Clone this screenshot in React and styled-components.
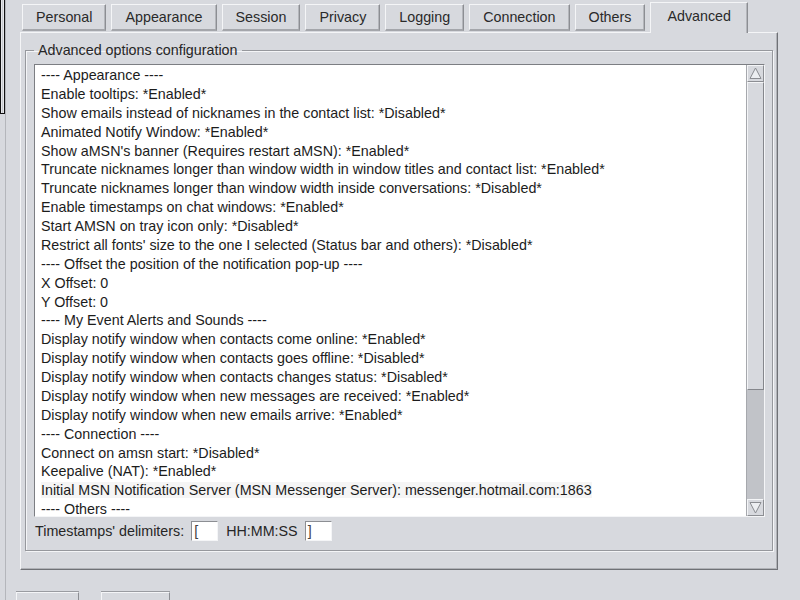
import React from 'react';
import styled, { createGlobalStyle } from 'styled-components';

const Global = createGlobalStyle`
  html, body {
    margin: 0;
    padding: 0;
    background: #d7d9de;
  }
  body {
    font-family: "Liberation Sans", Arial, sans-serif;
    font-size: 14.3px;
    color: #1c1c1c;
  }
`;

const Window = styled.div`
  display: flex;
  width: 800px;
  height: 600px;
  overflow: hidden;
  background: #d7d9de;
`;

const LeftEdge = styled.div`
  width: 6px;
  flex: none;
  display: flex;
  flex-direction: column;
  border-right: 1px solid #b4b6bb;
  box-sizing: border-box;

  .frame {
    height: 114px;
    width: 5px;
    box-sizing: border-box;
    border: 1px solid #111;
    border-top: none;
    background: #c8cacf;
    box-shadow: inset 1px 0 0 #e6e7ea, inset -1px 0 0 #e6e7ea;
  }
`;

const Body = styled.div`
  flex: 1;
  padding: 2px 22px 0 14px;
  display: flex;
  flex-direction: column;
`;

const TabBar = styled.div`
  display: flex;
  align-items: flex-end;
  gap: 5px;
  padding-left: 2px;
  position: relative;
  z-index: 1;
`;

const Tab = styled.div`
  box-sizing: border-box;
  height: ${p => (p.$active ? '31px' : '27px')};
  margin-bottom: ${p => (p.$active ? '-1px' : '1px')};
  padding: 0 ${p => (p.$active ? '16px' : '13px')};
  display: flex;
  align-items: center;
  padding-bottom: ${p => (p.$active ? '4px' : '1px')};
  background: #d7d9de;
  border: 1px solid #8c8e93;
  border-top-color: #f4f5f7;
  border-left-color: #f4f5f7;
  border-bottom: ${p => (p.$active ? 'none' : '2px solid #a4a6ab')};
  box-shadow: inset -1px 0 0 #b4b6bb;
  color: #2a2a2a;
  white-space: nowrap;
`;

const Panel = styled.div`
  box-sizing: border-box;
  height: 539px;
  border: 1px solid #6f7176;
  border-top-color: #f4f5f7;
  border-left-color: #f4f5f7;
  box-shadow: inset -1px -1px 0 #b0b2b7;
  padding: 8px 4px 18px 4px;
  display: flex;
  flex-direction: column;
`;

const Group = styled.fieldset`
  margin: 0;
  padding: 5px 7px 9px 8px;
  border: 1px solid #96989d;
  box-shadow: inset 1px 1px 0 #f4f5f7, 1px 1px 0 #f4f5f7;
  flex: 1;
  display: flex;
  flex-direction: column;
  min-width: 0;

  legend {
    padding: 0 4px;
    line-height: 18px;
    color: #262626;
  }
`;

const ListBox = styled.div`
  display: flex;
  height: 453px;
  box-sizing: border-box;
  border: 1px solid #7c7e83;
  border-right-color: #f4f5f7;
  border-bottom-color: #f4f5f7;
  background: #fff;
`;

const Lines = styled.div`
  flex: 1;
  padding: 1px 0 0 6px;
  overflow: hidden;
  line-height: 18.87px;
  color: #1c1c1c;
  white-space: nowrap;
`;

const Line = styled.div`
  span {
    background: ${p => (p.$selected ? '#f5f5f5' : 'transparent')};
  }
`;

const Scrollbar = styled.div`
  width: 17px;
  flex: none;
  display: flex;
  flex-direction: column;
  background: #c1c3c8;
  border-left: 1px solid #a6a8ad;
`;

const Arrow = styled.div`
  height: 17px;
  flex: none;
  box-sizing: border-box;
  background: #d7d9de;
  border: 1px solid #8c8e93;
  border-top-color: #f4f5f7;
  border-left-color: #f4f5f7;
  display: flex;
  align-items: center;
  justify-content: center;
`;

const Thumb = styled.div`
  height: 308px;
  box-sizing: border-box;
  background: #d7d9de;
  border: 1px solid #85878c;
  border-top-color: #f4f5f7;
  border-left-color: #f4f5f7;
`;

const Track = styled.div`
  flex: 1;
`;

const StampRow = styled.div`
  display: flex;
  align-items: center;
  margin-top: 4px;
  padding-left: 1px;
  height: 20px;
  color: #262626;
`;

const Entry = styled.div`
  width: 27px;
  height: 20px;
  box-sizing: border-box;
  background: #fff;
  border: 1px solid #8c8e93;
  border-right-color: #f4f5f7;
  border-bottom-color: #f4f5f7;
  margin: ${p => p.$margin};
  padding-left: 2px;
  line-height: 18px;
  color: #444;
`;

const ButtonRow = styled.div`
  display: flex;
  gap: 22px;
  margin: 22px 0 0 -4px;
`;

const Button = styled.div`
  width: ${p => p.$w}px;
  height: 30px;
  box-sizing: border-box;
  background: #d7d9de;
  border: 1px solid #8c8e93;
  border-top-color: #f4f5f7;
  border-left-color: #f4f5f7;
  box-shadow: 0 -1px 0 #9a9ca1;
`;

const tabs = ['Personal', 'Appearance', 'Session', 'Privacy', 'Logging', 'Connection', 'Others', 'Advanced'];

const lines = [
  '---- Appearance ----',
  'Enable tooltips: *Enabled*',
  'Show emails instead of nicknames in the contact list: *Disabled*',
  'Animated Notify Window: *Enabled*',
  "Show aMSN's banner (Requires restart aMSN): *Enabled*",
  'Truncate nicknames longer than window width in window titles and contact list: *Enabled*',
  'Truncate nicknames longer than window width inside conversations: *Disabled*',
  'Enable timestamps on chat windows: *Enabled*',
  'Start AMSN on tray icon only: *Disabled*',
  "Restrict all fonts' size to the one I selected (Status bar and others): *Disabled*",
  '---- Offset the position of the notification pop-up ----',
  'X Offset: 0',
  'Y Offset: 0',
  '---- My Event Alerts and Sounds ----',
  'Display notify window when contacts come online: *Enabled*',
  'Display notify window when contacts goes offline: *Disabled*',
  'Display notify window when contacts changes status: *Disabled*',
  'Display notify window when new messages are received: *Enabled*',
  'Display notify window when new emails arrive: *Enabled*',
  '---- Connection ----',
  'Connect on amsn start: *Disabled*',
  'Keepalive (NAT): *Enabled*',
  'Initial MSN Notification Server (MSN Messenger Server): messenger.hotmail.com:1863',
  '---- Others ----',
];

function Triangle({ down }) {
  return (
    <svg width="13" height="13" viewBox="0 0 13 13">
      <polygon
        points={down ? '1,1.5 12,1.5 6.5,12' : '1,11.5 12,11.5 6.5,1'}
        fill="#eceef1"
        stroke="#8a8c91"
        strokeWidth="1"
      />
    </svg>
  );
}

export default function App() {
  return (
    <Window>
      <Global />
      <LeftEdge>
        <div className="frame" />
      </LeftEdge>
      <Body>
        <TabBar>
          {tabs.map(t => (
            <Tab key={t} $active={t === 'Advanced'}>{t}</Tab>
          ))}
        </TabBar>
        <Panel>
          <Group>
            <legend>Advanced options configuration</legend>
            <ListBox>
              <Lines>
                {lines.map((l, i) => (
                  <Line key={i} $selected={i === 22}><span>{l}</span></Line>
                ))}
              </Lines>
              <Scrollbar>
                <Arrow><Triangle /></Arrow>
                <Thumb />
                <Track />
                <Arrow><Triangle down /></Arrow>
              </Scrollbar>
            </ListBox>
            <StampRow>
              Timestamps' delimiters:
              <Entry $margin="0 8px 0 7px">[</Entry>
              HH:MM:SS
              <Entry $margin="0 0 0 7px">]</Entry>
            </StampRow>
          </Group>
        </Panel>
        <ButtonRow>
          <Button $w={63} />
          <Button $w={69} />
        </ButtonRow>
      </Body>
    </Window>
  );
}
